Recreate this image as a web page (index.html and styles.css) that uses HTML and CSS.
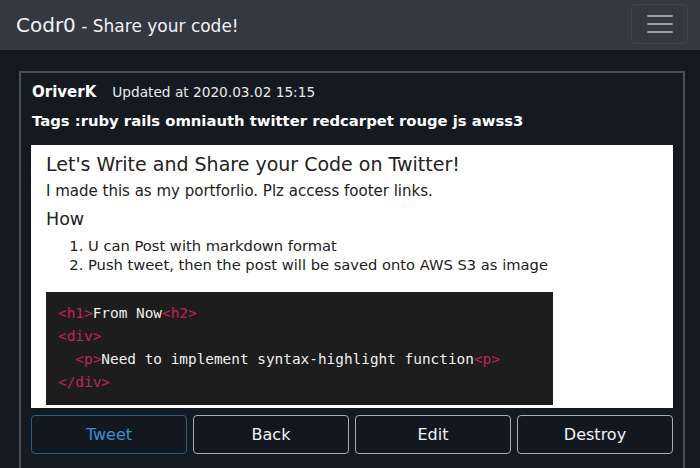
FILE: index.html
```html
<!DOCTYPE html>
<html>
<head>
<meta charset="utf-8">
<link rel="stylesheet" href="styles.css">
</head>
<body>
<nav class="navbar">
  <div class="brand"><span class="brand-name">Codr0</span><span class="brand-sub"> - Share your code!</span></div>
  <button class="toggler" aria-label="menu">
    <svg width="26" height="20" viewBox="0 0 26 20"><g stroke="#9aa0a6" stroke-width="2" stroke-linecap="round"><line x1="1" y1="2" x2="25" y2="2"/><line x1="1" y1="10" x2="25" y2="10"/><line x1="1" y1="18" x2="25" y2="18"/></g></svg>
  </button>
</nav>
<main class="main">
  <section class="card">
    <div class="meta"><span class="author">OriverK</span><span class="updated">Updated at 2020.03.02 15:15</span></div>
    <div class="tags">Tags :ruby rails omniauth twitter redcarpet rouge js awss3</div>
    <article class="content">
      <h1>Let's Write and Share your Code on Twitter!</h1>
      <p>I made this as my portforlio. Plz access footer links.</p>
      <h2>How</h2>
      <ol>
        <li>U can Post with markdown format</li>
        <li>Push tweet, then the post will be saved onto AWS S3 as image</li>
      </ol>
      <pre class="code"><span class="tag">&lt;h1&gt;</span>From Now<span class="tag">&lt;h2&gt;</span>
<span class="tag">&lt;div&gt;</span>
  <span class="tag">&lt;p&gt;</span>Need to implement syntax-highlight function<span class="tag">&lt;p&gt;</span>
<span class="tag">&lt;/div&gt;</span></pre>
    </article>
    <div class="actions">
      <a class="btn btn-tweet">Tweet</a>
      <a class="btn">Back</a>
      <a class="btn">Edit</a>
      <a class="btn">Destroy</a>
    </div>
  </section>
</main>
</body>
</html>
```
FILE: styles.css
```css
html, body {
  margin: 0;
  padding: 0;
}
body {
  background: #151a21;
  font-family: "DejaVu Sans", Verdana, sans-serif;
  color: #fff;
  width: 700px;
  height: 468px;
  overflow: hidden;
}
.navbar {
  height: 53px;
  background: #343841;
  display: flex;
  align-items: center;
  justify-content: space-between;
  padding: 0 12px 0 16px;
  box-sizing: border-box;
  border-bottom: 3px solid #111720;
}
.brand {
  color: #f2f2f2;
  display: flex;
  align-items: baseline;
}
.brand-name {
  font-size: 20px;
}
.brand-sub {
  font-size: 17px;
  white-space: pre;
}
.toggler {
  width: 57px;
  height: 40px;
  background: #343841;
  border: 1px solid #40454d;
  border-radius: 4px;
  display: flex;
  align-items: center;
  justify-content: center;
  padding: 0;
  margin-top: -2px;
}
.main {
  padding: 18px 15px 0 19px;
}
.card {
  border: 2px solid #4a5059;
  border-bottom: none;
  padding: 10px 10px 20px 10px;
  background: #151a21;
}
.meta {
  display: flex;
  align-items: baseline;
  gap: 16px;
  padding-left: 1px;
  height: 28px;
}
.author {
  font-weight: bold;
  font-size: 15px;
}
.updated {
  font-size: 13.7px;
  color: #eaeaea;
}
.tags {
  font-weight: bold;
  font-size: 14.8px;
  padding-left: 1px;
  margin-top: 1px;
  height: 33px;
}
.content {
  background: #fff;
  color: #222;
  padding: 6px 15px 4px 15px;
  height: 253px;
  overflow: hidden;
}
.content h1 {
  font-size: 19px;
  font-weight: normal;
  margin: 0;
  line-height: 26px;
}
.content p {
  font-size: 15px;
  margin: 0;
  line-height: 28px;
}
.content h2 {
  font-size: 17.5px;
  font-weight: normal;
  margin: 0;
  line-height: 28px;
}
.content ol {
  font-size: 14.7px;
  margin: 3px 0 18px 0;
  padding-left: 42px;
  line-height: 19px;
}
.code {
  background: #1d1d1d;
  color: #f0f0f0;
  width: 507px;
  box-sizing: border-box;
  margin: 0;
  padding: 10px 12px 11px 12px;
  font-family: "DejaVu Sans Mono", monospace;
  font-size: 14.4px;
  line-height: 23px;
}
.code .tag {
  color: #c2245b;
}
.actions {
  display: grid;
  grid-template-columns: repeat(4, 1fr);
  gap: 6px;
  margin-top: 7px;
}
.btn {
  height: 39px;
  box-sizing: border-box;
  border: 1px solid #a8adb3;
  border-radius: 4px;
  display: flex;
  align-items: center;
  justify-content: center;
  font-size: 16px;
  color: #f4f4f4;
  background: #131820;
}
.btn-tweet {
  border-color: #2b5f85;
  color: #3a8fd0;
}
```
